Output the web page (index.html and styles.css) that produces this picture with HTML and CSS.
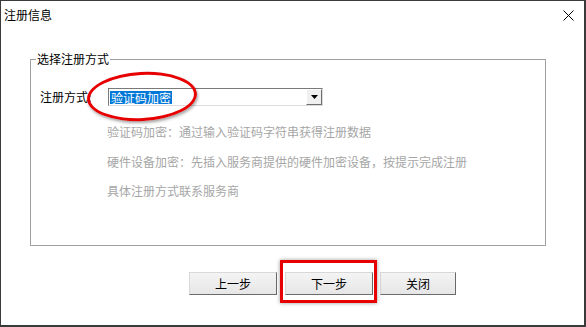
FILE: index.html
```html
<!DOCTYPE html>
<html lang="zh-CN">
<head>
<meta charset="utf-8">
<title>注册信息</title>
<link rel="stylesheet" href="styles.css">
</head>
<body>
<div class="window">
  <div class="titlebar">
    <span class="title">注册信息</span>
    <svg class="close" width="11" height="11" viewBox="0 0 11 11"><path d="M0.5 0.5 L10.5 10.5 M10.5 0.5 L0.5 10.5" stroke="#000" stroke-width="1" fill="none"/></svg>
  </div>
  <fieldset class="group">
    <legend class="legend">选择注册方式</legend>
    <div class="row">
      <span class="label">注册方式:</span>
      <div class="combo">
        <span class="selected">验证码加密</span>
        <span class="drop"><svg width="7" height="4" viewBox="0 0 7 4"><path d="M0 0 H7 L3.5 4 Z" fill="#000"/></svg></span>
      </div>
    </div>
    <div class="desc">
      <div class="line">验证码加密：通过输入验证码字符串获得注册数据</div>
      <div class="line">硬件设备加密：先插入服务商提供的硬件加密设备，按提示完成注册</div>
      <div class="line">具体注册方式联系服务商</div>
    </div>
  </fieldset>
  <div class="buttons">
    <button class="btn">上一步</button>
    <button class="btn">下一步</button>
    <button class="btn btn-close">关闭</button>
  </div>
  <div class="mark-ellipse"></div>
  <div class="mark-rect"></div>
</div>
</body>
</html>
```
FILE: styles.css
```css
html, body {
  margin: 0;
  padding: 0;
  background: #fff;
}
.window {
  position: relative;
  box-sizing: border-box;
  width: 586px;
  height: 327px;
  border: 1px solid #3a3a3a;
  border-right-width: 2px;
  border-bottom-width: 2px;
  background: #fff;
  font-family: "Noto Sans CJK SC", "Noto Sans", sans-serif;
  font-size: 12px;
  color: #000;
}
.titlebar {
  height: 28px;
  display: flex;
  align-items: center;
  justify-content: space-between;
  padding: 0 10px 0 3px;
}
.title {
  font-size: 12px;
  line-height: 14px;
}
.close {
  display: block;
}
.group {
  box-sizing: border-box;
  width: 516px;
  height: 194px;
  margin: 23px 0 0 29px;
  padding: 0 0 0 9px;
  border: 1px solid #a0a0a0;
}
.legend {
  padding: 0 1px;
  margin-left: -4px;
  line-height: 14px;
  font-size: 12px;
}
.row {
  display: flex;
  align-items: center;
  margin-top: 22px;
}
.label {
  width: 68px;
  line-height: 18px;
}
.combo {
  box-sizing: border-box;
  width: 215px;
  height: 18px;
  border: 1px solid;
  border-color: #7a7a7a #dcdcdc #dcdcdc #7a7a7a;
  display: flex;
  align-items: center;
  justify-content: space-between;
  padding-left: 1px;
}
.selected {
  background: #0078d7;
  color: #fff;
  line-height: 13px;
  padding: 0 1px;
}
.drop {
  box-sizing: border-box;
  width: 16px;
  height: 16px;
  background: #f0f0f0;
  border: 1px solid;
  border-color: #fff #6e6e6e #6e6e6e #fff;
  display: flex;
  align-items: center;
  justify-content: center;
}
.desc {
  margin: 19px 0 0 67px;
  color: #a6a6a6;
}
.line {
  height: 29.5px;
  line-height: 14px;
}
.buttons {
  display: flex;
  margin: 26px 0 0 188px;
  gap: 8px;
}
.btn {
  box-sizing: border-box;
  width: 88px;
  height: 23px;
  padding: 0;
  font-family: "Noto Sans CJK SC", "Noto Sans", sans-serif;
  font-size: 12px;
  color: #000;
  background: linear-gradient(#f4f4f4, #e6e6e6);
  border: 1px solid;
  border-color: #d8d8d8 #6a6a6a #6a6a6a #d8d8d8;
}
.btn-close {
  width: 76px;
  margin-left: -1px;
}
.mark-ellipse {
  position: absolute;
  left: 86px;
  top: 71px;
  width: 110px;
  height: 49px;
  box-sizing: border-box;
  border: 3px solid #e60000;
  border-radius: 50%;
  box-shadow: 1px 2px 3px rgba(0, 0, 0, 0.35);
  transform: rotate(-3deg);
}
.mark-rect {
  position: absolute;
  left: 279px;
  top: 259px;
  width: 97px;
  height: 43px;
  box-sizing: border-box;
  border: 3px solid #e60000;
  box-shadow: 0 0 4px rgba(0, 0, 0, 0.4);
}
```
